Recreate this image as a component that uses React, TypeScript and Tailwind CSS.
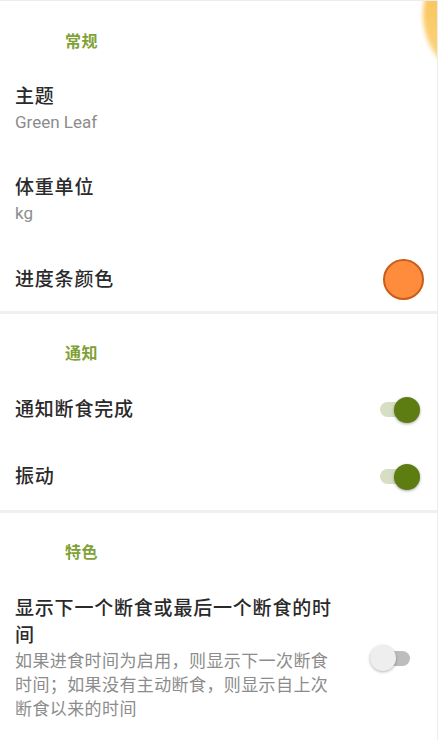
import React from 'react';

const font = { fontFamily: 'Roboto, "Noto Sans CJK SC", sans-serif' };

function Toggle({ on }: { on: boolean }) {
  return (
    <div className="relative w-[40px] h-[26px] flex items-center">
      <div
        className={
          on
            ? 'w-[40px] h-[15px] rounded-full bg-[#d6dfc3]'
            : 'w-[40px] h-[15px] rounded-full bg-[#bdbdbd]'
        }
      />
      <div
        className={
          on
            ? 'absolute right-0 top-0 w-[26px] h-[26px] rounded-full bg-[#5d7c12] shadow-[0_1px_3px_rgba(0,0,0,0.35)]'
            : 'absolute left-0 top-0 w-[26px] h-[26px] rounded-full bg-[#eeeeee] shadow-[0_1px_3px_rgba(0,0,0,0.3)]'
        }
      />
    </div>
  );
}

function Header({ text }: { text: string }) {
  return (
    <div className="pl-[65px] pt-[28px] pb-[10px]">
      <div className="text-[16px] leading-[24px] font-bold tracking-[0.5px] text-[#7fa136]">{text}</div>
    </div>
  );
}

function Divider() {
  return <div className="h-[3px] bg-[#efefef]" />;
}

export default function App() {
  return (
    <div
      className="relative w-[438px] h-[740px] overflow-hidden bg-white border-t border-[#ececec]"
      style={font}
    >
      <div className="absolute left-[423px] top-[-55px] w-[138px] h-[138px] rounded-full bg-gradient-to-b from-[#f9bb3c] to-[#fcd98a] blur-[2px]" />
      <div className="absolute right-0 top-0 w-px h-full bg-[#ececec]" />

      {/* 常规 */}
      <div className="pl-[65px] h-[82px] flex items-center">
        <div className="text-[16px] leading-[24px] font-bold tracking-[0.5px] text-[#7fa136]">常规</div>
      </div>
      <div className="h-[91px] pl-[15px]">
        <div className="text-[19px] leading-[27px] tracking-[0.8px] font-medium text-[#2a2a2a]">主题</div>
        <div className="text-[17px] leading-[24px] text-[#8c8c8c]">Green Leaf</div>
      </div>
      <div className="h-[77px] pl-[15px]">
        <div className="text-[19px] leading-[27px] tracking-[0.8px] font-medium text-[#2a2a2a]">体重单位</div>
        <div className="text-[17px] leading-[24px] text-[#8c8c8c]">kg</div>
      </div>
      <div className="h-[56px] pl-[15px] pr-[14px] flex items-center justify-between">
        <div className="text-[19px] leading-[27px] tracking-[0.8px] font-medium text-[#2a2a2a]">进度条颜色</div>
        <div className="w-[41px] h-[41px] rounded-full bg-[#ff8b3d] border-2 border-[#c95d1c]" />
      </div>
      <div className="h-[4px]" />
      <Divider />

      {/* 通知 */}
      <Header text="通知" />
      <div className="h-[67px] pl-[15px] pr-[18px] flex items-center justify-between">
        <div className="text-[19px] leading-[27px] tracking-[0.8px] font-medium text-[#2a2a2a]">通知断食完成</div>
        <Toggle on />
      </div>
      <div className="h-[67px] pl-[15px] pr-[18px] flex items-center justify-between">
        <div className="text-[19px] leading-[27px] tracking-[0.8px] font-medium text-[#2a2a2a]">振动</div>
        <Toggle on />
      </div>
      <Divider />

      {/* 特色 */}
      <Header text="特色" />
      <div className="pl-[15px] pr-[28px] pt-[20px] flex items-center justify-between">
        <div className="w-[324px]">
          <div className="text-[19px] leading-[27px] tracking-[0.8px] font-medium text-[#2a2a2a]">
            显示下一个断食或最后一个断食的时间
          </div>
          <div className="text-[17px] leading-[24px] tracking-[0.4px] text-[#8c8c8c]">
            如果进食时间为启用，则显示下一次断食时间；如果没有主动断食，则显示自上次断食以来的时间
          </div>
        </div>
        <Toggle on={false} />
      </div>
    </div>
  );
}
